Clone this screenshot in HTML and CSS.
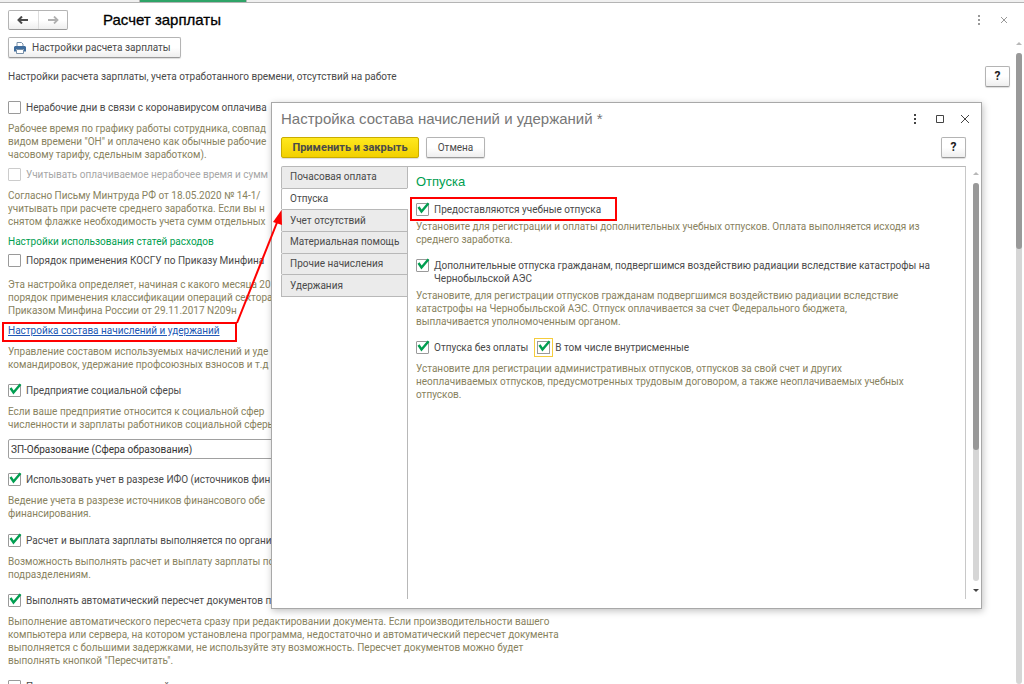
FILE: index.html
```
<!DOCTYPE html>
<html lang="ru">
<head>
<meta charset="utf-8">
<title>Расчет зарплаты</title>
<link rel="stylesheet" href="styles.css">
</head>
<body>
<div class="tabstrip"><span class="tabstrip-active"></span></div>
<div class="window">
  <header class="topbar">
    <div class="history">
      <button class="history-btn" aria-label="Назад"><svg width="12" height="8" viewBox="0 0 12 8"><path d="M1 4h10M5 .5L1.500 4 5 7.500" fill="none" stroke="#4a4a4a" stroke-width="2"/></svg></button>
      <button class="history-btn" aria-label="Вперед"><svg width="12" height="8" viewBox="0 0 12 8"><path d="M1 4h10M7 .5L10.500 4 7 7.500" fill="none" stroke="#b0b0b0" stroke-width="1.800"/></svg></button>
    </div>
    <h1 class="page-title">Расчет зарплаты</h1>
    <div class="window-tools muted">
      <button class="icon-btn" aria-label="Меню"><svg width="10" height="10" viewBox="0 0 10 10"><path d="M4 0h2v2H4zM4 4h2v2H4zM4 8h2v2H4z" fill="currentColor"/></svg></button>
      <button class="icon-btn" aria-label="Закрыть"><svg width="8" height="8" viewBox="0 0 8 8"><path d="M1 1l6 6M7 1L1 7" stroke="currentColor" stroke-width="1"/></svg></button>
    </div>
  </header>
  <div class="workspace">
    <main class="settings">
      <div class="commands">
        <button class="btn btn-print"><svg width="12" height="12" viewBox="0 0 12 12"><path d="M3 4V.5h4.500L9 2v2" fill="#fff" stroke="#7890a8"/><path d="M1 4h10l1 1v4.500h-2V7H2v2.500H0V5z" fill="#3f6c9c"/><path d="M2.500 7.500h7v4h-7z" fill="#fff" stroke="#7890a8"/></svg>Настройки расчета зарплаты</button>
      </div>
      <div class="intro"><span>Настройки расчета зарплаты, учета отработанного времени, отсутствий на работе</span><button class="btn btn-help">?</button></div>

      <label class="check gap-section"><input type="checkbox"><span>Нерабочие дни в связи с коронавирусом оплачива</span></label>
      <p class="hint">Рабочее время по графику работы сотрудника, совпад<br>видом времени "ОН" и оплачено как обычные рабочие<br>часовому тарифу, сдельным заработком).</p>
      <label class="check disabled"><input type="checkbox" disabled><span>Учитывать оплачиваемое нерабочее время и сумм</span></label>
      <p class="hint">Согласно Письму Минтруда РФ от 18.05.2020 № 14-1/<br>учитывать при расчете среднего заработка. Если вы н<br>снятом флажке необходимость учета сумм отдельных</p>
      <h2 class="group">Настройки использования статей расходов</h2>
      <label class="check gap-tight"><input type="checkbox"><span>Порядок применения КОСГУ по Приказу Минфина</span></label>
      <p class="hint gap-medium">Эта настройка определяет, начиная с какого месяца 20<br>порядок применения классификации операций сектора<br>Приказом Минфина России от 29.11.2017 N209н</p>
      <a class="link" href="#composition">Настройка состава начислений и удержаний</a>
      <p class="hint">Управление составом используемых начислений и уде<br>командировок, удержание профсоюзных взносов и т.д</p>
      <label class="check gap-block"><input type="checkbox" checked><span>Предприятие социальной сферы</span></label>
      <p class="hint">Если ваше предприятие относится к социальной сфер<br>численности и зарплаты работников социальной сферы</p>
      <input class="field" type="text" aria-label="Сфера деятельности" value="ЗП-Образование (Сфера образования)">
      <label class="check gap-section"><input type="checkbox" checked><span>Использовать учет в разрезе ИФО (источников фин</span></label>
      <p class="hint">Ведение учета в разрезе источников финансового обе<br>финансирования.</p>
      <label class="check gap-section"><input type="checkbox" checked><span>Расчет и выплата зарплаты выполняется по органи</span></label>
      <p class="hint">Возможность выполнять расчет и выплату зарплаты по<br>подразделениям.</p>
      <label class="check gap-block"><input type="checkbox" checked><span>Выполнять автоматический пересчет документов п</span></label>
      <p class="hint">Выполнение автоматического пересчета сразу при редактировании документа. Если производительности вашего<br>компьютера или сервера, на котором установлена программа, недостаточно и автоматический пересчет документа<br>выполняется с большими задержками, не используйте эту возможность. Пересчет документов можно будет<br>выполнять кнопкой "Пересчитать".</p>
      <label class="check gap-block"><input type="checkbox"><span>Проверять расчет начислений</span></label>
    </main>
    <div class="scroll"><i class="arrow-up"></i><div class="track"><div class="thumb thumb-page"></div></div></div>
  </div>
</div>

<section class="dialog" id="composition" role="dialog" aria-labelledby="dlg-title">
  <header class="dialog-head">
    <h2 class="dialog-title" id="dlg-title">Настройка состава начислений и удержаний *</h2>
    <div class="window-tools">
      <button class="icon-btn" aria-label="Меню"><svg width="10" height="10" viewBox="0 0 10 10"><path d="M4 0h2v2H4zM4 4h2v2H4zM4 8h2v2H4z" fill="currentColor"/></svg></button>
      <button class="icon-btn" aria-label="Развернуть"><svg width="8" height="8" viewBox="0 0 8 8"><path d="M.5.5h7v7h-7z" fill="none" stroke="currentColor"/></svg></button>
      <button class="icon-btn" aria-label="Закрыть"><svg width="8" height="8" viewBox="0 0 8 8"><path d="M0 0l8 8M8 0L0 8" stroke="currentColor" stroke-width="1"/></svg></button>
    </div>
  </header>
  <div class="dialog-actions">
    <button class="btn btn-primary">Применить и закрыть</button>
    <button class="btn btn-cancel">Отмена</button>
    <button class="btn btn-help">?</button>
  </div>
  <div class="dialog-body">
    <nav class="side">
      <div class="side-tabs">
        <button class="side-tab">Почасовая оплата</button>
        <button class="side-tab active">Отпуска</button>
        <button class="side-tab">Учет отсутствий</button>
        <button class="side-tab">Материальная помощь</button>
        <button class="side-tab">Прочие начисления</button>
        <button class="side-tab">Удержания</button>
      </div>
      <div class="side-rest"></div>
    </nav>
    <div class="panel">
      <h3 class="panel-title">Отпуска</h3>
      <label class="check"><input type="checkbox" checked><span>Предоставляются учебные отпуска</span></label>
      <p class="hint">Установите для регистрации и оплаты дополнительных учебных отпусков. Оплата выполняется исходя из<br>среднего заработка.</p>
      <label class="check"><input type="checkbox" checked><span>Дополнительные отпуска гражданам, подвергшимся воздействию радиации вследствие катастрофы на<br>Чернобыльской АЭС</span></label>
      <p class="hint">Установите, для регистрации отпусков гражданам подвергшимся воздействию радиации вследствие<br>катастрофы на Чернобыльской АЭС. Отпуск оплачивается за счет Федерального бюджета,<br>выплачивается уполномоченным органом.</p>
      <div class="check-pair">
        <label class="check"><input type="checkbox" checked><span>Отпуска без оплаты</span></label>
        <label class="check focused"><input type="checkbox" checked><span>В том числе внутрисменные</span></label>
      </div>
      <p class="hint gap-pair">Установите для регистрации административных отпусков, отпусков за свой счет и других<br>неоплачиваемых отпусков, предусмотренных трудовым договором, а также неоплачиваемых учебных<br>отпусков.</p>
    </div>
    <div class="scroll scroll-dialog"><i class="arrow-up"></i><div class="track"><div class="thumb thumb-dialog"></div></div><i class="arrow-down"></i></div>
  </div>
</section>

<svg class="marks" width="1024" height="684" viewBox="0 0 1024 684" aria-hidden="true">
  <g fill="none" stroke="#ff0000" stroke-width="2">
    <rect x="3" y="323" width="233" height="18"/>
    <rect x="411" y="198" width="205" height="22"/>
    <path d="M237 323L278 220"/>
  </g>
  <path d="M281.500 210L273 222l9 3z" fill="#ff0000"/>
</svg>
</body>
</html>
```
FILE: styles.css
```
* { box-sizing: border-box; }

body {
  margin: 0;
  height: 100vh;
  overflow: hidden;
  display: flex;
  flex-direction: column;
  background: #fff;
  color: #4a4a4a;
  font: 10px/13px Roboto, "Liberation Sans", sans-serif;
}

h1, h2, h3, p { margin: 0; font-weight: 400; }
button, input { font: inherit; color: inherit; }

.tabstrip {
  flex: none;
  height: 3px;
  padding-left: 139px;
  border-bottom: 1px solid #b4b4b4;
  background: #f0f0f0;
}
.tabstrip-active {
  display: block;
  width: 108px;
  height: 2px;
  border: solid #b4b4b4;
  border-width: 0 1px;
  background: #2fa468;
}

.window { flex: 1; min-height: 0; display: flex; flex-direction: column; }
.topbar { display: flex; align-items: center; height: 33px; padding: 0 12px 0 8px; }
.history {
  display: flex;
  width: 60px;
  height: 20px;
  border: 1px solid #b4b4b4;
  border-bottom-color: #999;
  border-radius: 2px;
  background: linear-gradient(#fff 50%, #eee);
}
.history-btn {
  flex: 1;
  display: flex;
  align-items: center;
  justify-content: center;
  padding: 0;
  border: 0;
  background: none;
}
.history-btn + .history-btn { border-left: 1px solid #ddd; }
.page-title {
  margin-left: 35px;
  color: #000;
  font: 15px/20px "Liberation Sans", Arial, sans-serif;
  -webkit-text-stroke: 0.3px #000;
}
.window-tools { display: flex; gap: 9px; margin-left: auto; color: #444; }
.window-tools.muted { color: #999; }
.icon-btn {
  display: flex;
  align-items: center;
  justify-content: center;
  width: 16px;
  height: 16px;
  padding: 0;
  border: 0;
  background: none;
}

.workspace { flex: 1; min-height: 0; display: flex; }
.settings {
  flex: 1;
  min-width: 0;
  display: flex;
  flex-direction: column;
  align-items: flex-start;
  padding: 1px 4px 0 8px;
  overflow: hidden;
  white-space: nowrap;
}
.settings > * { flex: none; }

.btn {
  display: inline-flex;
  align-items: center;
  justify-content: center;
  height: 21px;
  padding: 0 10px;
  border: 1px solid #b4b4b4;
  border-bottom-color: #999;
  border-radius: 2px;
  background: linear-gradient(#fff 50%, #eee);
  box-shadow: 0 1px 1px #ddd;
}
.btn-print { width: 173px; padding: 0 5px; gap: 6px; justify-content: flex-start; }
.btn-help { width: 25px; margin-left: auto; padding: 0; color: #222; font-size: 12px; font-weight: 700; }
.intro {
  display: flex;
  align-items: center;
  align-self: stretch;
  margin-top: 8px;
}

.check { display: flex; gap: 5px; margin-top: 7px; color: #4a4a4a; }
.check.disabled { color: #a6a6a6; }
.check input {
  appearance: none;
  flex: none;
  width: 13px;
  height: 13px;
  margin: 0;
  border: 1px solid #9a9a9a;
  border-radius: 1px;
  background: #fff;
}
.check input:disabled { border-color: #ccc; }
.check input:checked::before {
  content: "";
  display: block;
  width: 13px;
  height: 12px;
  margin-top: -2px;
  background: url("data:image/svg+xml,%3Csvg xmlns='http://www.w3.org/2000/svg' viewBox='0 0 13 12'%3E%3Cpath d='M1.500 5L4.500 9.500 11.500 1.200' fill='none' stroke='%23009e50' stroke-width='2.400'/%3E%3C/svg%3E");
}
.hint { margin-top: 8px; color: #88825e; }
.group { margin-top: 7px; color: #009e50; font-size: 10px; line-height: 13px; }
.link { margin-top: 7px; color: #2158b5; }
.gap-tight { margin-top: 6px; }
.hint.gap-medium { margin-top: 11px; }
.check.gap-section { margin-top: 14px; }
.check.gap-block { margin-top: 13px; }

.field {
  width: 560px;
  height: 20px;
  margin-top: 8px;
  padding: 0 2px;
  border: 1px solid #a0a0a0;
  border-radius: 2px;
  background: #fff;
  color: #333;
}

.scroll {
  flex: none;
  display: flex;
  flex-direction: column;
  align-items: center;
  gap: 8px;
  width: 10px;
  padding-top: 6px;
}
.arrow-up, .arrow-down { border: solid transparent; border-width: 0 3px; }
.arrow-up { border-bottom: 3px solid #b8b8b8; }
.arrow-down { border-top: 3px solid #444; }
.track { flex: 1; width: 6px; border-radius: 3px; background: #d6d6d6; }
.thumb { border-radius: 3px; background: #999; }
.thumb-page { height: 31%; }
.thumb-dialog { height: 67%; }

.dialog {
  position: absolute;
  top: 102px;
  left: 271px;
  width: 711px;
  height: 507px;
  display: flex;
  flex-direction: column;
  padding: 7px 0 9px 9px;
  border: 1px solid #a8a8a8;
  background: #fff;
  box-shadow: 1px 2px 7px rgba(0, 0, 0, 0.25);
  white-space: nowrap;
}
.dialog-head { display: flex; align-items: center; height: 18px; padding-right: 8px; }
.dialog-title { color: #777; font: 15px/18px "Liberation Sans", Arial, sans-serif; }
.dialog-actions { display: flex; gap: 7px; margin: 9px 15px 8px 0; }
.btn-primary {
  width: 138px;
  border-color: #c9ac00;
  background: linear-gradient(#ffe81e, #f2d000);
  font-size: 11px;
  font-weight: 700;
}
.btn-cancel { width: 59px; }

.dialog-body { flex: 1; min-height: 0; display: flex; }
.side { display: flex; flex-direction: column; width: 127px; }
.side-tabs { display: flex; flex-direction: column; height: 130px; }
.side-tab {
  flex: 1;
  padding: 0 0 1px 8px;
  border: 1px solid #b8b8b8;
  border-bottom: 0;
  border-radius: 2px 0 0 0;
  background: #ebebeb;
  text-align: left;
}
.side-tab.active { border-right-color: #fff; background: #fff; }
.side-rest { flex: 1; border-top: 1px solid #b8b8b8; border-right: 1px solid #b8b8b8; }
.panel {
  flex: 1;
  min-width: 0;
  padding: 7px 8px;
  border-top: 1px solid #b8b8b8;
  border-right: 1px solid #c8c8c8;
}
.panel-title { color: #009e50; font: 13px/16px "Liberation Sans", Arial, sans-serif; }
.panel .check { margin-top: 13px; }
.panel .hint { margin-top: 4px; }
.panel .hint.gap-pair { margin-top: 8px; }
.check-pair { display: flex; gap: 9px; }
.check.focused input { outline: 1px solid #f5cc3c; outline-offset: 2px; border-radius: 0; }
.scroll-dialog { width: 9px; margin-right: 1px; margin-left: 5px; padding-bottom: 7px; }

.marks { position: absolute; top: 0; left: 0; pointer-events: none; }
```
